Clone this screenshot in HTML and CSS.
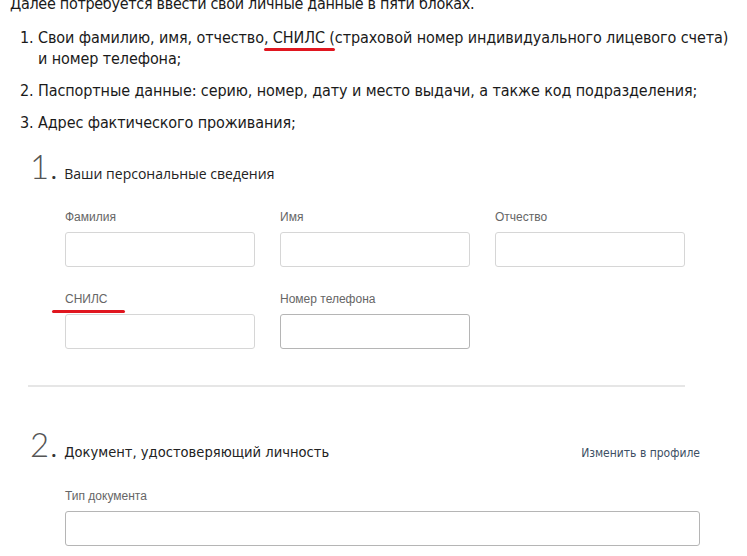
FILE: index.html
```html
<!DOCTYPE html>
<html lang="ru">
<head>
    <meta charset="UTF-8">
    <meta name="viewport" content="width=device-width, initial-scale=1.0">
    <title>Личные данные</title>
    <link rel="stylesheet" href="styles.css">
</head>
<body>
    <p class="intro">Далее потребуется ввести свои личные данные в пяти блоках.</p>
    <ol class="steps">
        <li>Свои фамилию, имя, отчество<span class="mark">, СНИЛС (</span>страховой номер индивидуального лицевого счета) и номер телефона;</li>
        <li>Паспортные данные: серию, номер, дату и место выдачи, а также код подразделения;</li>
        <li>Адрес фактического проживания;</li>
    </ol>

    <div class="form">
        <div class="block">
            <div class="block-head">
                <span class="num">1</span><span class="dot">.</span>
                <h3>Ваши персональные сведения</h3>
            </div>
            <div class="fields">
                <div class="field">
                    <label>Фамилия</label>
                    <input type="text">
                </div>
                <div class="field">
                    <label>Имя</label>
                    <input type="text">
                </div>
                <div class="field">
                    <label>Отчество</label>
                    <input type="text">
                </div>
                <div class="field">
                    <label><span class="mark mark-label">СНИЛС</span></label>
                    <input type="text">
                </div>
                <div class="field">
                    <label>Номер телефона</label>
                    <input type="text" class="dark">
                </div>
            </div>
        </div>

        <hr class="divider">

        <div class="block block-doc">
            <div class="block-head">
                <span class="num">2</span><span class="dot">.</span>
                <h3 class="narrow">Документ, удостоверяющий личность</h3>
                <a href="#" class="edit">Изменить в профиле</a>
            </div>
            <div class="field wide">
                <label class="narrow">Тип документа</label>
                <input type="text" class="dark">
            </div>
        </div>
    </div>
</body>
</html>
```

FILE: styles.css
```css
/* Страница с инструкцией и формой */
body {
    margin: 0;
    background-color: #fff;
    color: #222;
    font-family: "DejaVu Sans Condensed", "DejaVu Sans", sans-serif;
    font-stretch: condensed;
    overflow: hidden;
}
.intro {
    margin: -7px 0 0 10px;
    font-size: 16px;
    line-height: 22px;
    letter-spacing: -0.3px;
    color: #1a1a1a;
}
.steps {
    margin: 12px 0 0 0;
    padding-left: 38px;
    font-size: 16px;
    line-height: 21px;
    letter-spacing: -0.1px;
    color: #1a1a1a;
}
.steps li {
    margin-bottom: 11px;
    padding-right: 12px;
}
.mark {
    position: relative;
}
.mark::after {
    content: "";
    position: absolute;
    left: 0;
    right: 0;
    bottom: -4px;
    height: 3px;
    border-radius: 2px;
    background-color: #e0161f;
}

/* Форма */
.form {
    padding: 4px 0 0 28px;
    width: 672px;
    font-family: "Open Sans", Arial, sans-serif;
    font-stretch: normal;
}
.block-head {
    display: flex;
    align-items: baseline;
    padding-left: 2px;
}
.num {
    font-family: "Lato", "Open Sans", sans-serif;
    font-weight: 300;
    font-size: 33px;
    line-height: 36px;
    color: #555;
}
.dot {
    font-weight: bold;
    font-size: 18px;
    margin: 0 8px 0 2px;
    color: #333;
}
.block-head h3 {
    margin: 0;
    font-size: 14px;
    font-weight: normal;
    color: #222;
}
.fields {
    display: grid;
    grid-template-columns: repeat(3, 190px);
    column-gap: 25px;
    row-gap: 25px;
    padding: 26px 0 0 37px;
}
.field label {
    display: block;
    font-family: "Liberation Sans", Arial, sans-serif;
    font-size: 12px;
    line-height: 14px;
    color: #666;
    margin-bottom: 8px;
}
.field input {
    display: block;
    box-sizing: border-box;
    width: 100%;
    height: 35px;
    border: 1px solid #d6d6d6;
    border-radius: 3px;
    background: #fff;
}
.field input.dark {
    border-color: #b5b5b5;
}
.mark-label::after {
    left: -13px;
    right: -17px;
    bottom: -7px;
}
.divider {
    margin: 36px 0 0 0;
    width: 657px;
    border: none;
    border-top: 2px solid #e6e6e6;
}
.block-doc {
    padding-top: 39px;
}
.narrow {
    font-family: "DejaVu Sans Condensed", "DejaVu Sans", sans-serif;
    font-stretch: condensed;
}
.block-head h3.narrow {
    font-size: 14.6px;
}
.edit {
    margin-left: auto;
    font-family: "DejaVu Sans Condensed", "DejaVu Sans", sans-serif;
    font-stretch: condensed;
    font-size: 12px;
    color: #3c4f63;
    text-decoration: none;
}
.wide {
    padding: 27px 0 0 37px;
    width: 635px;
}
.field.wide label {
    font-size: 12px;
}
```
